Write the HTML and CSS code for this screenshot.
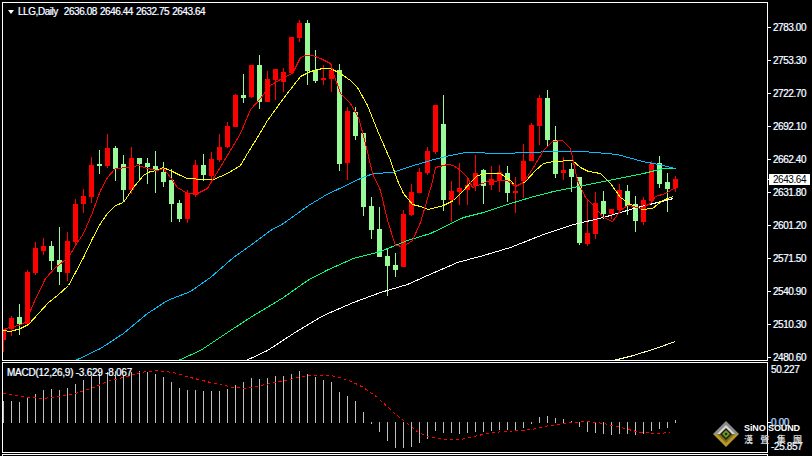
FILE: index.html
```html
<!DOCTYPE html>
<html lang="en">
<head>
<meta charset="utf-8">
<title>LLG,Daily</title>
<link rel="stylesheet" href="styles.css">
</head>
<body>
<main class="terminal">
  <section class="pane pane-main">
    <div class="plot plot-main">
      <svg id="price" class="canvas" width="764" height="357" viewBox="3 3 764 357"></svg>
      <div class="legend"><span class="legend-arrow"></span><span class="legend-symbol">LLG,Daily</span><span class="legend-ohlc">2636.08 2646.44 2632.75 2643.64</span></div>
    </div>
    <div class="axis axis-main">
      <span class="tick">2783.00</span>
      <span class="tick">2753.30</span>
      <span class="tick">2722.70</span>
      <span class="tick">2692.10</span>
      <span class="tick">2662.40</span>
      <span class="tick">2631.80</span>
      <span class="tick">2601.20</span>
      <span class="tick">2571.50</span>
      <span class="tick">2540.90</span>
      <span class="tick">2510.30</span>
      <span class="tick">2480.60</span>
      <span class="price-tag">2643.64</span>
    </div>
  </section>
  <section class="pane pane-sub">
    <div class="plot plot-sub">
      <svg id="macd" class="canvas" width="764" height="89" viewBox="3 363 764 89"></svg>
      <div class="legend legend-sub">MACD(12,26,9) -3.629 -8.067</div>
    </div>
    <div class="axis axis-sub">
      <span class="sub-top">50.227</span>
      <span class="sub-zero tick">0.00</span>
      <span class="sub-low">-25.857</span>
    </div>
  </section>
  <section class="pane pane-next"><div class="plot"></div></section>
  <aside class="logo">
    <svg class="logo-mark" width="26" height="26" viewBox="0 0 26 26">
      <polygon class="m-grey" points="13,0 26,13 0,13"/>
      <polygon class="m-gold" points="0,13 26,13 13,26"/>
      <polygon class="m-light" points="13,4 22,13 4,13"/>
      <polygon class="m-olive" points="4,13 22,13 13,22"/>
      <polygon class="m-dark" points="13,7 19,13 13,19 7,13"/>
      <polygon class="m-green" points="13,9 17,13 13,17 9,13"/>
      <polygon class="m-dark" points="13,11.5 14.5,13 13,14.5 11.5,13"/>
    </svg>
    <div class="logo-text">
      <span class="logo-en">SiNO SOUND</span>
      <span class="logo-cn"><span>漢</span><span>聲</span><span>集</span><span>團</span></span>
    </div>
  </aside>
</main>
<script src="chart.js"></script>
</body>
</html>
```

FILE: styles.css
```css
* { box-sizing: border-box; }
html, body { margin: 0; padding: 0; background: #000; }
.terminal {
  position: relative;
  width: 812px;
  height: 456px;
  padding: 2px 0 0 2px;
  overflow: hidden;
  background: #000;
  color: #fff;
  font: 10px/11px "Liberation Sans", sans-serif;
  letter-spacing: -0.45px;
  text-shadow: -0.4px 0 rgba(90, 170, 255, 0.7), 0.4px 0 rgba(255, 190, 120, 0.45);
}
.pane { display: flex; }
.pane-main { height: 359px; }
.pane-sub { height: 91px; margin-top: 1px; }
.pane-next { height: 40px; margin-top: 1px; }
.plot { position: relative; width: 766px; height: 100%; border: 1px solid #fff; }
.canvas { display: block; }
.legend { position: absolute; top: 3px; left: 4px; display: flex; align-items: center; white-space: nowrap; }
.legend-arrow { width: 0; height: 0; margin: 0 4px 0 1px; border: solid transparent; border-width: 4px 3.5px 0; border-top-color: #fff; }
.legend-symbol { margin-right: 6px; }
.legend-ohlc { word-spacing: 0.8px; }
.legend-sub { top: 4px; left: 4px; letter-spacing: -0.25px; }
.axis { position: relative; display: flex; flex-direction: column; width: 44px; white-space: nowrap; }
.axis-main { padding: 20px 0 0 5px; gap: 22px; }
.axis-sub { padding: 2px 0 0 3px; letter-spacing: -0.35px; }
.tick { position: relative; }
.tick::before { content: ""; position: absolute; left: -5px; top: 5px; width: 3px; height: 1px; background: #fff; }
.sub-zero { margin-top: 42px; color: #a8d2ff; }
.sub-zero::before { left: -3px; }
.sub-low { margin-top: 13px; }
.price-tag { position: absolute; left: 1px; top: 172px; width: 41px; height: 11px; padding-left: 4px; background: #fff; color: #000; text-shadow: none; }
.price-tag::before { content: ""; position: absolute; left: -1px; top: 5px; width: 1px; height: 1px; background: #fff; }
.up { fill: #98fb98; }
.down { fill: #ff0000; }
.line { fill: none; stroke-width: 1; shape-rendering: crispEdges; }
.ma-red { stroke: #ff0000; }
.ma-yellow { stroke: #ffff00; }
.ma-blue { stroke: #00bfff; }
.ma-green { stroke: #00ff7f; }
.ma-white { stroke: #ffffff; }
.ma-pale { stroke: #ffffb0; }
.hist { fill: #c0c0c0; }
.signal { stroke: #ff0000; stroke-dasharray: 3 3; }
.logo { position: absolute; left: 713px; top: 421px; display: flex; align-items: center; gap: 5px; text-shadow: none; letter-spacing: 0; }
.logo-mark { display: block; }
.m-grey { fill: #8c8c8c; }
.m-gold { fill: #b6982a; }
.m-light { fill: #d8d8d8; }
.m-olive { fill: #7d6a1c; }
.m-dark { fill: #1c1c10; }
.m-green { fill: #6f9a22; }
.logo-text { display: flex; flex-direction: column; gap: 2px; width: 58px; }
.logo-en { font: bold 9px/9px "Liberation Sans", sans-serif; color: #fff; white-space: nowrap; letter-spacing: -0.1px; }
.logo-cn { display: flex; justify-content: space-between; font: bold 9px/9px "Noto Sans CJK TC", sans-serif; color: #d8d8d8; }
```

FILE: chart.js
```js
var NS = "http://www.w3.org/2000/svg";
// [direction, wick top, body top, body bottom, wick bottom]; candle i has its body at x = 1 + 8i
var candles = [
[0,329,329,340,352],[0,316,318,329,336],[1,304,317,324,335],[0,270,272,324,325],[0,242,248,273,275],
[0,238,246,251,255],[1,241,246,261,270],[1,227,260,272,285],[0,232,241,273,281],[0,199,204,242,245],
[0,189,196,204,213],[0,157,165,197,203],[1,150,164,166,174],[0,134,148,166,168],[1,146,148,169,181],
[1,155,164,190,202],[0,147,158,190,194],[1,158,158,164,180],[1,158,163,167,184],[1,151,166,170,193],
[1,162,172,182,187],[1,169,180,204,222],[1,200,203,219,222],[0,190,193,219,223],[0,160,165,195,197],
[1,154,165,175,181],[0,152,159,176,181],[0,134,147,160,162],[0,122,126,147,148],[0,94,95,127,127],
[1,74,95,98,103],[0,65,65,97,98],[1,55,65,102,109],[0,71,79,102,102],[0,69,69,80,100],
[0,68,72,82,92],[0,37,37,73,73],[0,20,23,38,42],[1,20,23,71,85],[1,50,70,81,83],
[0,65,78,80,85],[0,64,70,79,92],[1,64,70,164,171],[0,107,111,163,180],[1,107,112,136,140],
[1,133,133,207,216],[1,197,206,230,239],[1,207,229,257,257],[1,248,256,266,296],[1,253,265,270,277],
[0,210,214,267,267],[0,184,192,215,216],[0,168,172,193,193],[0,147,151,173,175],[0,105,105,152,154],
[1,95,124,200,211],[0,181,191,200,222],[0,163,188,192,205],[0,178,185,190,205],[0,155,173,186,191],
[1,169,170,186,204],[0,166,179,185,190],[0,165,172,181,192],[1,166,173,193,202],[0,177,191,193,213],
[0,144,161,181,198],[0,123,125,161,161],[0,95,98,126,145],[1,90,98,140,146],[1,126,140,174,178],
[0,157,170,173,180],[1,163,169,177,192],[1,177,177,243,245],[0,199,233,244,246],[0,192,203,234,239],
[1,191,201,214,219],[0,209,209,214,219],[0,184,190,210,211],[1,185,191,206,215],[1,196,204,221,232],
[0,197,200,222,225],[0,161,164,201,201],[1,156,163,184,188],[1,173,182,189,212],[0,176,179,188,192]
];
var lines = {
"ma-white": "245,360 250,358 267,350 293,333 323,315 353,302 380,292 407,284 427,275 457,262 483,255 510,247 543,234 573,224 603,217 637,207 673,198",
"ma-pale": "613,360 633,355 655,348 675,341",
"ma-green": "178,360 200,350 230,330 250,317 283,297 307,280 328,269 353,258 380,251 407,240 430,233 463,217 483,212 510,203 530,197 553,191 583,185 613,179 643,173 663,168 675,168",
"ma-blue": "75,360 100,348 123,333 147,313 167,300 190,291 210,277 233,257 250,245 270,230 283,223 308,205 328,193 335,190 360,178 373,173 392,172 413,165 437,158 450,155 465,152 503,153 527,152 555,151 583,151 617,154 642,161 658,164 675,168",
"ma-yellow": "3,330 10,331 20,328 28,324 38,313 48,302 57,295 68,285 75,272 83,257 92,238 100,223 107,213 115,205 123,202 133,187 143,175 150,171 157,170 162,167 170,170 180,175 187,178 203,179 213,179 227,173 240,165 247,153 260,132 267,120 283,98 293,85 300,76 310,71 322,68 330,68 340,73 350,80 357,87 367,105 377,130 390,160 397,180 403,193 412,204 420,206 428,209 443,205 453,200 463,190 470,182 477,175 487,173 500,173 510,180 515,186 525,181 535,170 543,163 553,161 572,160 580,167 588,171 600,173 610,183 620,197 632,205 642,209 652,208 662,200 673,196",
"ma-red": "3,329 9,327 18,325 25,322 33,303 45,278 55,267 68,257 75,245 83,233 92,212 100,190 107,177 115,168 128,167 138,165 147,168 157,170 163,168 170,177 177,187 187,193 197,193 207,188 213,178 230,150 240,133 250,109 260,98 270,85 283,77 292,73 300,57 305,55 312,55 320,58 330,63 333,73 340,93 350,103 358,117 365,143 372,173 380,190 387,220 395,245 403,246 412,240 420,222 432,181 435,167 447,164 453,165 460,170 467,177 472,187 477,185 487,181 507,180 515,186 523,182 533,167 543,150 552,141 562,140 570,148 577,180 585,197 593,205 603,217 612,221 620,210 627,205 633,206 640,208 650,203 655,196 665,193 675,187"
};
// end of each histogram bar; the baseline is y = 422
var bars = [401,401,402,398,394,390,389,390,388,384,380,376,373,372,371,375,372,371,372,374,377,382,388,390,390,391,391,391,389,385,382,378,379,378,376,376,374,371,374,377,380,382,392,396,401,412,423,431,440,447,447,446,442,438,430,432,432,433,432,431,431,430,429,429,430,427,423,417,416,418,419,421,426,431,432,433,434,433,433,434,433,430,428,427,420];
var signal = "3,393 20,396 43,398 57,396 75,393 93,387 110,380 127,376 140,372 155,370 173,372 190,377 210,382 233,387 245,388 260,385 280,381 298,377 310,375 330,375 340,377 353,382 363,387 377,397 393,412 407,423 418,432 430,437 447,439 460,439 473,436 487,433 503,431 520,430 532,429 543,426 557,424 570,422 587,421 603,423 617,426 628,429 640,432 657,433 670,432";

function el(parent, tag, cls, attrs) {
  var node = document.createElementNS(NS, tag);
  node.setAttribute("class", cls);
  for (var key in attrs) node.setAttribute(key, attrs[key]);
  parent.appendChild(node);
  return node;
}
function shift(points) {
  return points.split(" ").map(function (p) {
    var xy = p.split(",");
    return (+xy[0] + 0.5) + "," + (+xy[1] + 0.5);
  }).join(" ");
}
var price = document.getElementById("price");
var macd = document.getElementById("macd");
var d = ["", ""];
candles.forEach(function (c, i) {
  var x = 1 + 8 * i;
  d[c[0]] += "M" + (x + 2) + " " + c[1] + "h1V" + c[4] + "h-1z" +
             "M" + x + " " + c[2] + "h5V" + Math.max(c[3], c[2] + 1) + "h-5z";
});
el(price, "path", "down", { d: d[0], "shape-rendering": "crispEdges" });
el(price, "path", "up", { d: d[1], "shape-rendering": "crispEdges" });
Object.keys(lines).forEach(function (name) {
  el(price, "polyline", "line " + name, { points: shift(lines[name]) });
});
bars.forEach(function (y, i) {
  el(macd, "rect", "hist", { x: 3 + 8 * i, y: Math.min(y, 422), width: 1, height: Math.abs(y - 422) + 1 });
});
el(macd, "polyline", "line signal", { points: shift(signal) });
```
